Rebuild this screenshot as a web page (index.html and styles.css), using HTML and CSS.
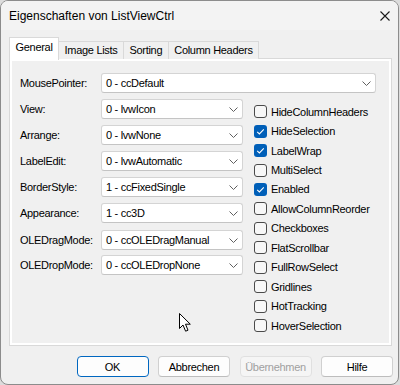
FILE: index.html
```html
<!DOCTYPE html>
<html lang="de">
<head>
    <meta charset="UTF-8">
    <title>Eigenschaften von ListViewCtrl</title>
    <link rel="stylesheet" href="styles.css">
</head>
<body>
    <div class="window">
        <div class="titlebar">
            <span class="title">Eigenschaften von ListViewCtrl</span>
            <svg class="close" width="10" height="10" viewBox="0 0 10 10">
                <path d="M0.5 0.5 L9.5 9.5 M9.5 0.5 L0.5 9.5" stroke="#1a1a1a" stroke-width="1.1" fill="none"/>
            </svg>
        </div>
        <div class="client">
            <div class="tabs">
                <div class="tab active">General</div>
                <div class="tab">Image Lists</div>
                <div class="tab">Sorting</div>
                <div class="tab">Column Headers</div>
            </div>
            <div class="panel">
                <div class="page">
                    <div class="field">
                        <span class="label">MousePointer:</span>
                        <div class="combo wide">0 - ccDefault<svg class="arrow" width="9" height="5" viewBox="0 0 9 5"><path d="M0.5 0.5 L4.5 4.5 L8.5 0.5" stroke="#606060" fill="none"/></svg></div>
                    </div>
                    <div class="cols">
                        <div class="fields">
                            <div class="field"><span class="label">View:</span><div class="combo">0 - lvwIcon<svg class="arrow" width="9" height="5" viewBox="0 0 9 5"><path d="M0.5 0.5 L4.5 4.5 L8.5 0.5" stroke="#606060" fill="none"/></svg></div></div>
                            <div class="field"><span class="label">Arrange:</span><div class="combo">0 - lvwNone<svg class="arrow" width="9" height="5" viewBox="0 0 9 5"><path d="M0.5 0.5 L4.5 4.5 L8.5 0.5" stroke="#606060" fill="none"/></svg></div></div>
                            <div class="field"><span class="label">LabelEdit:</span><div class="combo">0 - lvwAutomatic<svg class="arrow" width="9" height="5" viewBox="0 0 9 5"><path d="M0.5 0.5 L4.5 4.5 L8.5 0.5" stroke="#606060" fill="none"/></svg></div></div>
                            <div class="field"><span class="label">BorderStyle:</span><div class="combo">1 - ccFixedSingle<svg class="arrow" width="9" height="5" viewBox="0 0 9 5"><path d="M0.5 0.5 L4.5 4.5 L8.5 0.5" stroke="#606060" fill="none"/></svg></div></div>
                            <div class="field"><span class="label">Appearance:</span><div class="combo">1 - cc3D<svg class="arrow" width="9" height="5" viewBox="0 0 9 5"><path d="M0.5 0.5 L4.5 4.5 L8.5 0.5" stroke="#606060" fill="none"/></svg></div></div>
                            <div class="field"><span class="label">OLEDragMode:</span><div class="combo">0 - ccOLEDragManual<svg class="arrow" width="9" height="5" viewBox="0 0 9 5"><path d="M0.5 0.5 L4.5 4.5 L8.5 0.5" stroke="#606060" fill="none"/></svg></div></div>
                            <div class="field"><span class="label">OLEDropMode:</span><div class="combo">0 - ccOLEDropNone<svg class="arrow" width="9" height="5" viewBox="0 0 9 5"><path d="M0.5 0.5 L4.5 4.5 L8.5 0.5" stroke="#606060" fill="none"/></svg></div></div>
                        </div>
                        <div class="checks">
                            <div class="check"><span class="box"></span>HideColumnHeaders</div>
                            <div class="check"><span class="box on"><svg width="13" height="13" viewBox="0 0 13 13"><path d="M3.2 6.8 L5.4 9 L9.8 4.4" stroke="#fff" stroke-width="1.1" fill="none"/></svg></span>HideSelection</div>
                            <div class="check"><span class="box on"><svg width="13" height="13" viewBox="0 0 13 13"><path d="M3.2 6.8 L5.4 9 L9.8 4.4" stroke="#fff" stroke-width="1.1" fill="none"/></svg></span>LabelWrap</div>
                            <div class="check"><span class="box"></span>MultiSelect</div>
                            <div class="check"><span class="box on"><svg width="13" height="13" viewBox="0 0 13 13"><path d="M3.2 6.8 L5.4 9 L9.8 4.4" stroke="#fff" stroke-width="1.1" fill="none"/></svg></span>Enabled</div>
                            <div class="check"><span class="box"></span>AllowColumnReorder</div>
                            <div class="check"><span class="box"></span>Checkboxes</div>
                            <div class="check"><span class="box"></span>FlatScrollbar</div>
                            <div class="check"><span class="box"></span>FullRowSelect</div>
                            <div class="check"><span class="box"></span>Gridlines</div>
                            <div class="check"><span class="box"></span>HotTracking</div>
                            <div class="check"><span class="box"></span>HoverSelection</div>
                        </div>
                    </div>
                </div>
            </div>
            <div class="buttons">
                <button class="btn default">OK</button>
                <button class="btn">Abbrechen</button>
                <button class="btn" disabled>Übernehmen</button>
                <button class="btn">Hilfe</button>
            </div>
        </div>
        <!-- Mauszeiger -->
        <svg class="cursor" width="13" height="20" viewBox="0 0 13 20">
            <path d="M0.5 0.5 L0.5 15.5 L4 12 L6.6 18.2 L9 17.2 L6.5 11.2 L11.3 11.2 Z" fill="#fff" stroke="#000" stroke-width="1" stroke-linejoin="round"/>
        </svg>
    </div>
</body>
</html>
```

FILE: styles.css
```css
body {
    margin: 0;
    background: #dcdcdc;
    font-family: "Liberation Sans", Arial, sans-serif;
    font-size: 11px;
    letter-spacing: -0.3px;
    color: #000;
}
.window {
    position: relative;
    width: 397px;
    height: 383px;
    border: 1px solid #8c8c8c;
    border-radius: 8px;
    background: #f0f0f0;
    overflow: hidden;
}
.titlebar {
    height: 29px;
    display: flex;
    align-items: center;
    justify-content: space-between;
    padding: 0 8px 0 8px;
    background: #f3f3f3;
    font-size: 12px;
    letter-spacing: 0;
}
.client {
    padding: 8px 6px 0 8px;
}
.tabs {
    display: flex;
    align-items: flex-end;
    height: 21px;
    position: relative;
    z-index: 1;
}
.tab {
    height: 17px;
    line-height: 17px;
    padding: 0 5.5px;
    border: 1px solid #d9d9d9;
    border-bottom: none;
    margin-left: -1px;
    background: #f0f0f0;
}
.tab:first-child {
    margin-left: 0;
}
.tab.active {
    height: 22px;
    line-height: 19px;
    background: #fff;
    margin-bottom: -1px;
}
.panel {
    height: 282px;
    border: 1px solid #d9d9d9;
    background: #fff;
    padding: 2px;
    margin-top: -1px;
}
.page {
    height: 100%;
    background: #f0f0f0;
    padding: 12px 12px 0 8px;
    box-sizing: border-box;
}
.field {
    display: flex;
    align-items: center;
    height: 20px;
}
.label {
    width: 81px;
    flex: none;
}
.combo {
    position: relative;
    width: 142px;
    height: 20px;
    box-sizing: border-box;
    border: 1px solid #d4d4d4;
    border-bottom-color: #c4c4c4;
    border-radius: 3px;
    background: #fff;
    padding-left: 4px;
    line-height: 18px;
    display: flex;
    justify-content: space-between;
    align-items: center;
    padding-right: 4px;
}
.combo.wide {
    width: 275px;
}
.cols {
    display: flex;
    margin-top: 6px;
}
.fields {
    display: flex;
    flex-direction: column;
    gap: 6px;
}
.fields .field:nth-child(6) {
    margin-top: 1px;
}
.fields .field:nth-child(7) {
    margin-top: -1px;
}
.checks {
    margin-left: 11px;
    padding-top: 3px;
}
.check {
    display: flex;
    align-items: center;
    height: 19.45px;
}
.box {
    width: 13px;
    height: 13px;
    box-sizing: border-box;
    border: 1px solid #4a4a4a;
    border-radius: 3px;
    background: #f7f7f7;
    margin-right: 4px;
    flex: none;
}
.box.on {
    border: none;
    background: #005fb8;
}
.box svg {
    display: block;
}
.buttons {
    display: flex;
    justify-content: flex-end;
    gap: 9.5px;
    margin-top: 10px;
    margin-right: -1px;
}
.btn {
    width: 72px;
    height: 21px;
    padding: 0;
    font-family: "Liberation Sans", Arial, sans-serif;
    font-size: 11px;
    letter-spacing: -0.3px;
    color: #000;
    background: #fdfdfd;
    border: 1px solid #d0d0d0;
    border-bottom-color: #bdbdbd;
    border-radius: 4px;
}
.btn.default {
    border: 1px solid #0067c0;
}
.btn:disabled {
    background: #f5f5f5;
    color: #a0a0a0;
    border-color: #e0e0e0;
}
.cursor {
    position: absolute;
    left: 178px;
    top: 312px;
}
```
